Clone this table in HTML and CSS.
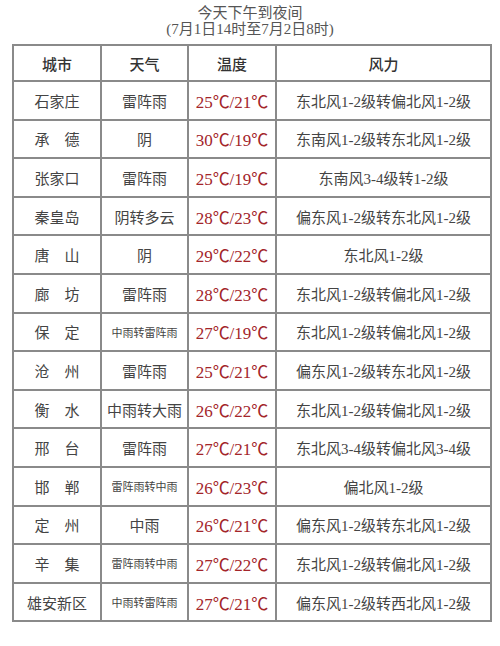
FILE: index.html
```html
<!DOCTYPE html>
<html lang="zh">
<head>
<meta charset="utf-8">
<link rel="stylesheet" href="styles.css">
</head>
<body>
<div class="page">
  <div class="title">
    <div class="t1">今天下午到夜间</div>
    <div class="t2">(7月1日14时至7月2日8时)</div>
  </div>
  <table class="wx">
    <colgroup>
      <col class="c1"><col class="c2"><col class="c3"><col class="c4">
    </colgroup>
    <thead>
      <tr class="head"><th>城市</th><th>天气</th><th>温度</th><th>风力</th></tr>
    </thead>
    <tbody>
      <tr><td>石家庄</td><td>雷阵雨</td><td class="temp">25℃/21℃</td><td>东北风1-2级转偏北风1-2级</td></tr>
      <tr><td>承&emsp;德</td><td>阴</td><td class="temp">30℃/19℃</td><td>东南风1-2级转东北风1-2级</td></tr>
      <tr><td>张家口</td><td>雷阵雨</td><td class="temp">25℃/19℃</td><td>东南风3-4级转1-2级</td></tr>
      <tr><td>秦皇岛</td><td>阴转多云</td><td class="temp">28℃/23℃</td><td>偏东风1-2级转东北风1-2级</td></tr>
      <tr><td>唐&emsp;山</td><td>阴</td><td class="temp">29℃/22℃</td><td>东北风1-2级</td></tr>
      <tr><td>廊&emsp;坊</td><td>雷阵雨</td><td class="temp">28℃/23℃</td><td>东北风1-2级转偏北风1-2级</td></tr>
      <tr><td>保&emsp;定</td><td class="small">中雨转雷阵雨</td><td class="temp">27℃/19℃</td><td>东北风1-2级转偏北风1-2级</td></tr>
      <tr><td>沧&emsp;州</td><td>雷阵雨</td><td class="temp">25℃/21℃</td><td>偏东风1-2级转东北风1-2级</td></tr>
      <tr><td>衡&emsp;水</td><td>中雨转大雨</td><td class="temp">26℃/22℃</td><td>东北风1-2级转偏北风1-2级</td></tr>
      <tr><td>邢&emsp;台</td><td>雷阵雨</td><td class="temp">27℃/21℃</td><td>东北风3-4级转偏北风3-4级</td></tr>
      <tr><td>邯&emsp;郸</td><td class="small">雷阵雨转中雨</td><td class="temp">26℃/23℃</td><td>偏北风1-2级</td></tr>
      <tr><td>定&emsp;州</td><td>中雨</td><td class="temp">26℃/21℃</td><td>偏东风1-2级转东北风1-2级</td></tr>
      <tr><td>辛&emsp;集</td><td class="small">雷阵雨转中雨</td><td class="temp">27℃/22℃</td><td>东北风1-2级转偏北风1-2级</td></tr>
      <tr class="last"><td>雄安新区</td><td class="small">中雨转雷阵雨</td><td class="temp">27℃/21℃</td><td>偏东风1-2级转西北风1-2级</td></tr>
    </tbody>
  </table>
</div>
</body>
</html>
```
FILE: styles.css
```css
html, body {
  margin: 0;
  padding: 0;
  background: #ffffff;
}
.page {
  width: 500px;
  height: 646px;
  font-family: "Liberation Serif", "Noto Sans CJK SC", serif;
  color: #444;
}
.title {
  text-align: center;
  padding-top: 5px;
  height: 44px;
  box-sizing: border-box;
  color: #555;
}
.t1 {
  font-size: 15px;
  line-height: 16px;
}
.t2 {
  font-size: 15px;
  line-height: 16px;
}
.wx {
  margin-left: 12px;
  width: 478px;
  border-collapse: collapse;
  table-layout: fixed;
}
.c1 { width: 88px; }
.c2 { width: 87px; }
.c3 { width: 88px; }
.c4 { width: 215px; }
.wx th, .wx td {
  border: 2px solid #8a8a8a;
  text-align: center;
  padding: 0;
  font-weight: normal;
  font-size: 15px;
  white-space: nowrap;
}
.wx th {
  color: #333;
  font-weight: 500;
}
.head { height: 36px; }
.wx tbody tr { height: 38.6px; }
.wx td.temp {
  color: #a3252a;
  font-size: 17px;
}
.wx td.small {
  font-size: 11px;
}
```
